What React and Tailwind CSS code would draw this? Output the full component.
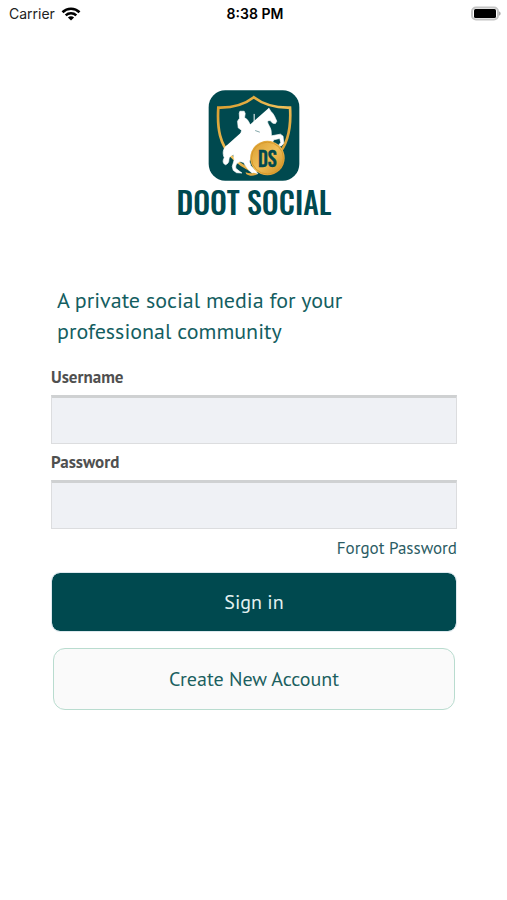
import React from "react";

const textFont = "font-['PT_Sans','Noto_Sans',sans-serif]";

function StatusBar() {
  return (
    <header className="grid h-7 grid-cols-3 items-center pr-1.5 pl-[9px] font-['Inter','Liberation_Sans',sans-serif] text-sm leading-5 text-[#222]">
      <div className="flex items-center gap-1.5">
        <span>Carrier</span>
        <svg className="h-3.5 w-5" viewBox="0 0 20 14" fill="none" stroke="#000" strokeWidth="2.6" aria-label="Wi-Fi">
          <path d="M1.5 5.2C6.2 .6 13.8 .6 18.5 5.2" />
          <path d="M4.7 8.4c3-2.8 7.6-2.8 10.6 0" />
          <path d="M10 13.5 6.9 10.5c1.8-1.6 4.4-1.6 6.2 0Z" fill="#000" stroke="none" />
        </svg>
      </div>
      <time className="text-center font-semibold text-black">8:38 PM</time>
      <svg className="h-4 w-[30px] justify-self-end" viewBox="0 0 30 16" aria-label="Battery">
        <rect x="1" y="1.5" width="26" height="12" rx="4" fill="#fff" stroke="#c4c4c4" strokeWidth="2" />
        <rect x="3" y="3" width="22" height="9" rx="1.5" fill="#000" />
        <path d="M28 5.4c2.2.6 2.2 3.8 0 4.4Z" fill="#aaa" />
      </svg>
    </header>
  );
}

function Logo() {
  return (
    <div className="flex flex-col items-center">
      <svg className="h-[91px] w-[92px]" viewBox="25 18 275 274" role="img" aria-label="Doot Social logo">
        <defs>
          <linearGradient id="gold" x1="0" y1="0" x2="1" y2="1">
            <stop offset="0" stopColor="#d79a2b" />
            <stop offset=".5" stopColor="#f0c05a" />
            <stop offset="1" stopColor="#c98a1e" />
          </linearGradient>
        </defs>
        <rect x="26" y="19" width="273" height="272" rx="50" fill="#00494f" />
        <path
          d="M162 40C134 62 95 72 55 71C51 135 60 181 94 217C112 237 134 251 163 264C194 250 215 236 234 215C265 180 275 132 271 71C230 72 190 62 162 40Z"
          fill="none"
          stroke="url(#gold)"
          strokeWidth="8"
        />
        <path
          d="M207 72 213 82C223 91 226 101 231 112L227 119 219 118 211 110 203 111C203 121 212 128 214 140L215 156 242 151 250 157 252 178 244 187 237 184 243 176 240 164 222 168 212 190 168 205C162 218 151 222 149 234L153 246 168 262 174 270 160 270 149 262 137 246 131 236 120 233 112 238C108 244 106 248 108 254L118 262 126 268 110 267 100 260 97 248 103 228 101 213C93 214 88 219 87 226 88 236 82 242 76 243 68 238 68 230 73 222 67 208 69 196 80 185 91 177 106 178C105 164 116 155 130 153L155 150 172 126C174 106 182 90 200 80Z"
          fill="#fff"
          stroke="#fff"
          strokeWidth="2"
          strokeLinejoin="round"
        />
        <path
          d="M118 88 120 82 133 82 136 89 134 101 142 107C149 115 149 123 156 128L176 129 180 150 200 180 163 196 146 196 131 164 122 153 125 139 115 132 113 112 119 103Z"
          fill="#fff"
          stroke="#fff"
          strokeWidth="2"
          strokeLinejoin="round"
        />
        <path d="M163 90V130" stroke="#fff" strokeWidth="3" />
        <path d="M166 140l14 5" fill="none" stroke="#00494f" strokeWidth="1.5" />
        <circle cx="203" cy="223" r="52" fill="url(#gold)" />
        <circle cx="203" cy="223" r="48" fill="none" stroke="#d8992a" strokeWidth="3" />
        <path d="M137 266c9 3 17 4 25 1l11 4c-11 7-24 7-34 0Z" fill="#e0a942" />
        <text
          x="203"
          y="249"
          textAnchor="middle"
          className="font-['Bebas_Neue','Liberation_Sans_Narrow',sans-serif] text-[73px]"
          fill="#00494f"
          stroke="#00494f"
          strokeWidth="1"
        >
          DS
        </text>
      </svg>
      <h1 className="mt-[3px] font-['Oswald','Bebas_Neue','Liberation_Sans_Narrow',sans-serif] text-[30px] leading-9 font-medium text-[#00494f]">
        DOOT SOCIAL
      </h1>
    </div>
  );
}

function Field({ id, label, type }) {
  return (
    <div className="flex flex-col gap-1.5">
      <label htmlFor={id} className="text-[17px] leading-6 font-bold text-[#505050]">
        {label}
      </label>
      <input
        id={id}
        name={id}
        type={type}
        className="h-[49px] w-full border border-t-3 border-[#dcdddf] border-t-[#cfd1d2] bg-[#eff1f5] px-3 text-lg outline-none"
      />
    </div>
  );
}

export default function App() {
  return (
    <div className={`min-h-screen bg-white ${textFont}`}>
      <StatusBar />
      <main className="pt-[62px] pr-[50px] pl-[51px]">
        <Logo />
        <form className="mt-[65px] flex flex-col" onSubmit={(e) => e.preventDefault()}>
          <p className="max-w-80 pl-[6px] text-[22px] leading-[31px] text-[#145e61]">
            A private social media for your professional community
          </p>
          <div className="mt-[18px] flex flex-col gap-1.5">
            <Field id="username" label="Username" type="text" />
            <Field id="password" label="Password" type="password" />
          </div>
          <a href="#forgot" className="mt-[7px] self-end text-[17px] leading-6 text-[#2b5c64]">
            Forgot Password
          </a>
          <button type="submit" className="mt-3 h-[60px] rounded-[9px] border border-[#dde8ee] bg-[#00494f] bg-clip-padding text-xl text-[#e3f1f1]">
            Sign in
          </button>
          <button type="button" className="mx-[2px] mt-4 h-[62px] rounded-xl border border-[#b9dccf] bg-[#fafafa] text-xl text-[#1b5f60]">
            Create New Account
          </button>
        </form>
      </main>
    </div>
  );
}
